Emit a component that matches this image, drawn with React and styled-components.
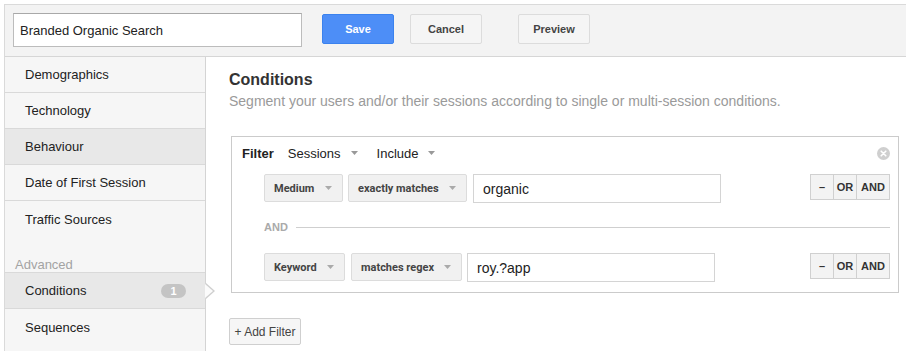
import React from 'react'
import styled, { createGlobalStyle } from "styled-components";

const GlobalStyle = createGlobalStyle`
    body {
        margin: 0;
        background: #ffffff;
        font-family: "Liberation Sans", Arial, sans-serif;
        color: #222;
    }
`

const Caret = ({ color = '#999' }) => (
    <svg width="7" height="4" viewBox="0 0 7 4">
        <path d="M0 0 L7 0 L3.5 4 Z" fill={color} />
    </svg>
);

const CloseIcon = () => (
    <svg width="13" height="13" viewBox="0 0 13 13">
        <circle cx="6.5" cy="6.5" r="6.5" fill="#cfcfcf" />
        <path d="M4.2 4.2 L8.8 8.8 M8.8 4.2 L4.2 8.8" stroke="#fff" strokeWidth="1.6" strokeLinecap="round" />
    </svg>
);

const navTop = ['Demographics', 'Technology', 'Behaviour', 'Date of First Session', 'Traffic Sources'];

const rows = [
    { dim: 'Keyword', dimW: 81, op: 'matches regex', opW: 111, value: 'roy.?app' },
];

const App = () => {
    return(
        <Page>
            <GlobalStyle />
            <Frame>
                <TopBar>
                    <NameInput defaultValue="Branded Organic Search" />
                    <Button $primary $ml={20}>Save</Button>
                    <Button $ml={16}>Cancel</Button>
                    <Button $ml={36}>Preview</Button>
                </TopBar>
                <Body>
                    <Sidebar>
                        <NavGroup>
                            {navTop.map((item) => (
                                <NavItem key={item} $active={item === 'Behaviour'}>{item}</NavItem>
                            ))}
                        </NavGroup>
                        <GroupLabel>Advanced</GroupLabel>
                        <NavGroup $bordered>
                            <NavItem $active $selected>
                                Conditions
                                <Badge>1</Badge>
                            </NavItem>
                            <NavItem>Sequences</NavItem>
                        </NavGroup>
                    </Sidebar>
                    <Main>
                        <Heading>Conditions</Heading>
                        <Subtitle>Segment your users and/or their sessions according to single or multi-session conditions.</Subtitle>
                        <FilterBox>
                            <FilterHeader>
                                <FilterLabel>Filter</FilterLabel>
                                <HeaderSelect>Sessions <Caret /></HeaderSelect>
                                <HeaderSelect>Include <Caret /></HeaderSelect>
                                <CloseButton><CloseIcon /></CloseButton>
                            </FilterHeader>
                            <ConditionRow>
                                <Select $w={79}>Medium <Caret color="#aaa" /></Select>
                                <Select $w={119} $ml={5}>exactly matches <Caret color="#aaa" /></Select>
                                <ValueInput defaultValue="organic" $ml={6} />
                                <Segments>
                                    <Segment $w={24}>–</Segment>
                                    <Segment $w={24}>OR</Segment>
                                    <Segment $w={34}>AND</Segment>
                                </Segments>
                            </ConditionRow>
                            <AndDivider>
                                <span>AND</span>
                                <DividerLine />
                            </AndDivider>
                            {rows.map((r) => (
                                <ConditionRow key={r.dim}>
                                    <Select $w={r.dimW}>{r.dim} <Caret color="#aaa" /></Select>
                                    <Select $w={r.opW} $ml={6}>{r.op} <Caret color="#aaa" /></Select>
                                    <ValueInput defaultValue={r.value} $ml={5} />
                                    <Segments>
                                        <Segment $w={24}>–</Segment>
                                        <Segment $w={24}>OR</Segment>
                                        <Segment $w={34}>AND</Segment>
                                    </Segments>
                                </ConditionRow>
                            ))}
                        </FilterBox>
                        <AddFilter>+ Add Filter</AddFilter>
                    </Main>
                </Body>
            </Frame>
        </Page>
    );
}

export default App;

const Page = styled.div`
    width: 906px;
    height: 351px;
    padding: 4px 0 0 4px;
    box-sizing: border-box;
    overflow: hidden;
`

const Frame = styled.div`
    height: 100%;
    border-top: 1px solid #dadada;
    border-left: 1px solid #dadada;
    display: flex;
    flex-direction: column;
`

const TopBar = styled.div`
    height: 52px;
    box-sizing: border-box;
    background: #f3f3f3;
    border-bottom: 1px solid #d6d6d6;
    display: flex;
    align-items: flex-start;
    padding: 8px 0 0 8px;
`

const NameInput = styled.input`
    width: 289px;
    height: 34px;
    box-sizing: border-box;
    border: 1px solid #bcbcbc;
    border-top-color: #a8a8a8;
    padding: 0 6px;
    font-family: "Liberation Sans", Arial, sans-serif;
    font-size: 13px;
    color: #222;
    outline: none;
`

const Button = styled.button`
    height: 30px;
    width: 72px;
    margin-top: 1px;
    margin-left: ${(p) => p.$ml || 0}px;
    box-sizing: border-box;
    border-radius: 2px;
    border: 1px solid ${(p) => (p.$primary ? '#3b82ee' : '#dcdcdc')};
    background: ${(p) => (p.$primary ? '#4d8ef7' : '#f5f5f5')};
    color: ${(p) => (p.$primary ? '#fff' : '#444')};
    font-family: "Liberation Sans", Arial, sans-serif;
    font-weight: 700;
    font-size: 11px;
    padding: 0;
`

const Body = styled.div`
    flex: 1;
    display: flex;
    min-height: 0;
`

const Sidebar = styled.div`
    width: 201px;
    box-sizing: border-box;
    background: #f6f6f6;
    border-right: 1px solid #d4d4d4;
    flex-shrink: 0;
`

const NavGroup = styled.div`
    border-top: ${(p) => (p.$bordered ? '1px solid #d9d9d9' : 'none')};
`

const NavItem = styled.div`
    position: relative;
    height: 36px;
    box-sizing: border-box;
    line-height: 35px;
    padding-left: 20px;
    font-size: 13px;
    color: #222;
    background: ${(p) => (p.$active ? '#e8e8e8' : 'transparent')};
    border-bottom: 1px solid #d9d9d9;
    display: flex;
    align-items: center;

    &:last-child {
        border-bottom: none;
    }

    ${(p) => p.$selected && `
        &::before {
            content: '';
            position: absolute;
            right: -10px;
            top: 10px;
            border-style: solid;
            border-width: 8px 0 8px 9px;
            border-color: transparent transparent transparent #cfcfcf;
        }
        &::after {
            content: '';
            position: absolute;
            right: -8px;
            top: 11px;
            border-style: solid;
            border-width: 7px 0 7px 8px;
            border-color: transparent transparent transparent #fbfbfb;
        }
    `}
`

const GroupLabel = styled.div`
    padding: 20px 0 0 10px;
    height: 35px;
    box-sizing: border-box;
    font-size: 13px;
    line-height: 15px;
    color: #a3a3a3;
`

const Badge = styled.span`
    margin-left: auto;
    margin-right: 19px;
    width: 25px;
    height: 14px;
    border-radius: 7px;
    background: #c4c4c4;
    color: #fff;
    font-weight: 700;
    font-size: 11px;
    line-height: 14px;
    text-align: center;
`

const Main = styled.div`
    flex: 1;
    background: #fff;
    padding: 13px 0 0 23px;
`

const Heading = styled.div`
    font-size: 16px;
    font-weight: 700;
    line-height: 20px;
    color: #333;
`

const Subtitle = styled.div`
    margin-top: 3px;
    font-size: 14px;
    line-height: 16px;
    color: #9a9a9a;
`

const FilterBox = styled.div`
    margin: 27px 0 0 2px;
    width: 668px;
    box-sizing: border-box;
    border: 1px solid #cbcbcb;
    padding: 0 8px 10px 10px;
`

const FilterHeader = styled.div`
    height: 32px;
    display: flex;
    align-items: center;
    font-size: 13px;
`

const FilterLabel = styled.span`
    font-weight: 700;
    color: #222;
    margin-right: 14px;
`

const HeaderSelect = styled.span`
    display: flex;
    align-items: center;
    gap: 10px;
    color: #222;
    margin-right: 19px;
`

const CloseButton = styled.span`
    margin-left: auto;
    display: flex;
`

const ConditionRow = styled.div`
    margin-top: 5px;
    padding-left: 22px;
    display: flex;
    align-items: flex-start;
`

const Select = styled.div`
    width: ${(p) => p.$w}px;
    margin-left: ${(p) => p.$ml || 0}px;
    height: 28px;
    box-sizing: border-box;
    background: #f1f1f1;
    border: 1px solid #dcdcdc;
    border-radius: 2px;
    padding: 0 10px 0 9px;
    display: flex;
    align-items: center;
    justify-content: space-between;
    font-family: Roboto, "Liberation Sans", sans-serif;
    font-weight: 700;
    font-size: 11px;
    color: #444;
`

const ValueInput = styled.input`
    margin-left: ${(p) => p.$ml || 0}px;
    width: 248px;
    height: 29px;
    box-sizing: border-box;
    border: 1px solid #d4d4d4;
    padding: 0 9px;
    font-family: "Liberation Sans", Arial, sans-serif;
    font-size: 14px;
    color: #222;
    outline: none;
`

const Segments = styled.div`
    margin-left: auto;
    display: flex;
    height: 26px;
`

const Segment = styled.div`
    width: ${(p) => p.$w}px;
    box-sizing: border-box;
    background: #f3f3f3;
    border: 1px solid #d0d0d0;
    margin-left: -1px;
    display: flex;
    align-items: center;
    justify-content: center;
    font-weight: 700;
    font-size: 11px;
    color: #333;
`

const AndDivider = styled.div`
    height: 22px;
    margin: 13px 0 15px 22px;
    display: flex;
    align-items: center;
    font-weight: 700;
    font-size: 11px;
    color: #aaa;
`

const DividerLine = styled.div`
    flex: 1;
    height: 1px;
    background: #cfcfcf;
    margin-left: 8px;
`

const AddFilter = styled.button`
    margin-top: 25px;
    width: 72px;
    height: 27px;
    box-sizing: border-box;
    border: 1px solid #cfcfcf;
    border-radius: 2px;
    background: #f6f6f6;
    padding: 0;
    font-family: "Liberation Sans", Arial, sans-serif;
    font-size: 12px;
    color: #444;
`
